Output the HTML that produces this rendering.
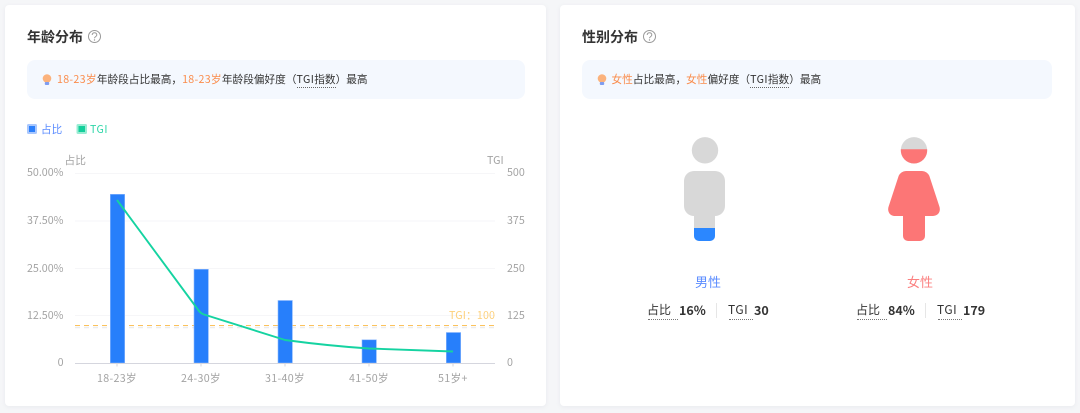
<!DOCTYPE html>
<html><head><meta charset="utf-8">
<style>
html,body{margin:0;padding:0}
body{width:1080px;height:413px;background:#f5f6f8;overflow:hidden;position:relative;font-family:"Noto Sans CJK SC","Liberation Sans",sans-serif;color:#333}
.card{position:absolute;top:5px;height:401px;background:#fff;border-radius:4px;box-shadow:0 1px 4px rgba(180,185,200,.18)}
.t{position:absolute;white-space:nowrap;line-height:16px}
.title{font-size:14px;color:#333;top:29px;font-weight:700}
.tip{position:absolute;top:60px;height:39px;background:#f4f8fe;border-radius:8px}
.tiptxt{font-size:10.67px;top:72px;color:#333}
.o{color:#fa8c4b}
.n{letter-spacing:.3px}
.dot{border-bottom:1px dotted #666}
.dot b{font-weight:400;letter-spacing:.4px}
.ax{font-size:10.7px;color:#a3a3a3}
.x{letter-spacing:.3px}
.r{text-align:right;width:50px}
.st{font-size:12px;color:#333;top:302px}
.g{letter-spacing:.5px}
.b{font-size:12.5px;font-weight:700;color:#333;top:302px}
.u{position:absolute;top:319px;height:0;border-top:1px dotted #777}
.dv{position:absolute;top:303px;width:1px;height:15px;background:#e6e6e6}
svg{position:absolute;left:0;top:0}
</style></head>
<body>
<div class="card" style="left:5px;width:541px"></div>
<div class="card" style="left:560px;width:515px"></div>

<div class="t title" style="left:27px">年龄分布</div>
<div class="t title" style="left:582px">性别分布</div>

<div class="tip" style="left:27px;width:498px"></div>
<div class="tip" style="left:582px;width:470px"></div>

<svg width="1080" height="413" viewBox="0 0 1080 413">
  <!-- help icons -->
  <g fill="none" stroke="#999" stroke-width="1">
    <circle cx="94.500" cy="36.500" r="6"/>
    <circle cx="649.500" cy="36.500" r="6"/>
    <path d="M92.200 35c0-3 4.600-3 4.600 0c0 1.700-2.300 1.600-2.300 3.300"/>
    <path d="M647.200 35c0-3 4.600-3 4.600 0c0 1.700-2.300 1.600-2.300 3.300"/>
  </g>
  <circle cx="94.500" cy="40" r=".7" fill="#999"/>
  <circle cx="649.500" cy="40" r=".7" fill="#999"/>
  <!-- bulbs -->
  <circle cx="47" cy="78.500" r="4.300" fill="#fbb27c"/>
  <rect x="44.800" y="82" width="4.400" height="3" rx="1" fill="#7f9df0"/>
  <circle cx="602" cy="78.500" r="4.300" fill="#fbb27c"/>
  <rect x="599.800" y="82" width="4.400" height="3" rx="1" fill="#7f9df0"/>

  <!-- legend -->
  <rect x="27" y="124" width="10" height="10" rx="1.500" fill="#a9c7fd"/>
  <rect x="29" y="126" width="6" height="6" fill="#2b7ffb"/>
  <rect x="76.500" y="124" width="10.500" height="10" rx="1.500" fill="#99ecd3"/>
  <rect x="78.500" y="126" width="6.500" height="6" fill="#13cf9b"/>

  <!-- grid -->
  <g stroke="#f6f6f8" stroke-width="1">
    <path d="M75 173.500H495M75 221H495M75 268.500H495M75 315.500H495"/>
  </g>
  <!-- threshold -->
  <path d="M75 327.500H495" stroke="#ececec" stroke-width="1.500" stroke-dasharray="5 4"/>
  <path d="M75 325.500H495" stroke="#fbc25c" stroke-width="1" stroke-dasharray="5 4"/>
  <!-- bars -->
  <g fill="#277ffb" stroke="#8cb8fd" stroke-width=".6">
    <rect x="110.300" y="194.300" width="14.400" height="168.700"/>
    <rect x="194" y="269.300" width="14.400" height="93.700"/>
    <rect x="278" y="300.500" width="14.400" height="62.500"/>
    <rect x="362" y="339.800" width="14.400" height="23.200"/>
    <rect x="446.300" y="332.500" width="14.400" height="30.500"/>
  </g>
  <!-- axis -->
  <path d="M75 363.500H495" stroke="#d5d6de" stroke-width="1"/>
  <path d="M117 363.500v3M201 363.500v3M285 363.500v3M369 363.500v3M453 363.500v3" stroke="#d5d6de" stroke-width="1"/>
  <!-- line -->
  <path d="M117 200L199 311Q201 313.500 204 314.500L285 340Q330 346 369 348.500L453 351.500" fill="none" stroke="#15d3a1" stroke-width="1.900"/>

  <!-- male -->
  <circle cx="705" cy="150.300" r="13.200" fill="#d8d8d8"/>
  <path d="M694 171h21a10 10 0 0 1 10 10v25a10 10 0 0 1-10 10v20a5 5 0 0 1-5 5h-11a5 5 0 0 1-5-5v-20a10 10 0 0 1-10-10v-25a10 10 0 0 1 10-10z" fill="#d8d8d8"/>
  <path d="M694 228h21v8a5 5 0 0 1-5 5h-11a5 5 0 0 1-5-5z" fill="#2b87ff"/>

  <!-- female -->
  <circle cx="914" cy="150.300" r="13.200" fill="#d8d8d8"/>
  <path d="M900.840 149.300A13.200 13.200 0 1 0 927.160 149.300z" fill="#fc7676"/>
  <path d="M906 171h16a8 8 0 0 1 7.300 4.800l10 30.500c1.800 5-1 9.700-6.300 9.700h-8v20a5 5 0 0 1-5 5h-12a5 5 0 0 1-5-5v-20h-8c-5.300 0-8.100-4.700-6.300-9.700l10-30.500a8 8 0 0 1 7.300-4.800z" fill="#fc7676"/>
</svg>

<div class="t tiptxt" style="left:57px"><span class="o n">18-23岁</span>年龄段占比最高，<span class="o n">18-23岁</span>年龄段偏好度（<span class="dot"><b>TGI</b>指数</span>）最高</div>
<div class="t tiptxt" style="left:611.500px"><span class="o">女性</span>占比最高，<span class="o">女性</span>偏好度（<span class="dot"><b>TGI</b>指数</span>）最高</div>

<div class="t" style="left:41px;top:122px;font-size:10.600px;color:#5b8cff">占比</div>
<div class="t g" style="left:90px;top:122px;font-size:10.600px;color:#2fd6a8">TGI</div>

<div class="t ax" style="left:64.500px;top:153px">占比</div>
<div class="t ax" style="left:487px;top:153px">TGI</div>

<div class="t ax r" style="left:13.500px;top:165px">50.00%</div>
<div class="t ax r" style="left:13.500px;top:213px">37.50%</div>
<div class="t ax r" style="left:13.500px;top:261px">25.00%</div>
<div class="t ax r" style="left:13.500px;top:308px">12.50%</div>
<div class="t ax r" style="left:13.500px;top:355px">0</div>

<div class="t ax" style="left:507px;top:165px">500</div>
<div class="t ax" style="left:507px;top:213px">375</div>
<div class="t ax" style="left:507px;top:261px">250</div>
<div class="t ax" style="left:507px;top:308px">125</div>
<div class="t ax" style="left:507px;top:355px">0</div>

<div class="t" style="left:449px;top:308px;font-size:10.700px;color:#fdd07b;letter-spacing:.15px">TGI：100</div>

<div class="t ax x" style="left:97px;top:371px">18-23岁</div>
<div class="t ax x" style="left:181px;top:371px">24-30岁</div>
<div class="t ax x" style="left:265px;top:371px">31-40岁</div>
<div class="t ax x" style="left:349px;top:371px">41-50岁</div>
<div class="t ax x" style="left:438px;top:371px">51岁+</div>

<div class="t" style="left:695px;top:274px;font-size:13px;color:#5b8cff">男性</div>
<div class="t" style="left:907px;top:274px;font-size:13px;color:#fb8080">女性</div>

<div class="t st" style="left:647px">占比</div>
<div class="t b" style="left:679px">16%</div>
<div class="dv" style="left:716px"></div>
<div class="t st g" style="left:728px">TGI</div>
<div class="t b" style="left:754px">30</div>
<div class="u" style="left:648px;width:30px"></div>
<div class="u" style="left:729px;width:24px"></div>

<div class="t st" style="left:856px">占比</div>
<div class="t b" style="left:888px">84%</div>
<div class="dv" style="left:925px"></div>
<div class="t st g" style="left:937px">TGI</div>
<div class="t b" style="left:963px">179</div>
<div class="u" style="left:857px;width:30px"></div>
<div class="u" style="left:938px;width:24px"></div>
</body></html>
